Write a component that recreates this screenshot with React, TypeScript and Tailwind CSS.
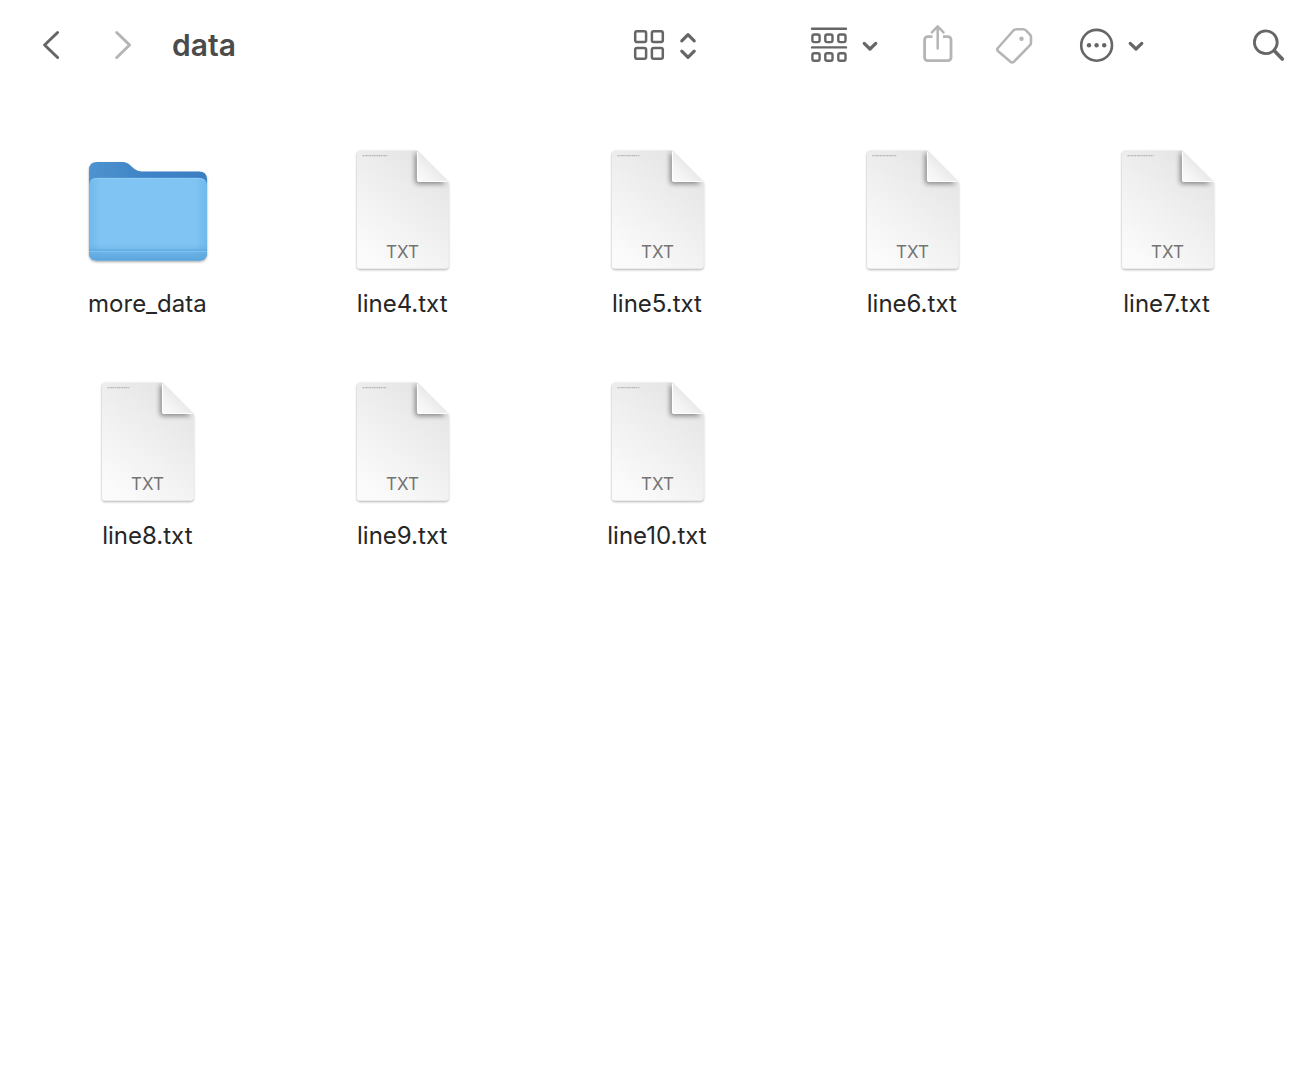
import type { ReactNode } from "react";

type Entry = { name: string; kind: "folder" | "txt"; preview?: number };

const entries: Entry[] = [
  { name: "more_data",  kind: "folder" },
  { name: "line4.txt",  kind: "txt", preview: 25 },
  { name: "line5.txt",  kind: "txt", preview: 22 },
  { name: "line6.txt",  kind: "txt", preview: 24 },
  { name: "line7.txt",  kind: "txt", preview: 26 },
  { name: "line8.txt",  kind: "txt", preview: 22 },
  { name: "line9.txt",  kind: "txt", preview: 24 },
  { name: "line10.txt", kind: "txt", preview: 22 },
];

function Glyph({ width, children }: { width: number; children: ReactNode }) {
  return (
    <svg
      width={width}
      height={44}
      viewBox={`0 0 ${width} 44`}
      fill="none"
      stroke="currentColor"
      strokeLinecap="round"
      strokeLinejoin="round"
      className="block shrink-0"
      aria-hidden="true"
    >
      {children}
    </svg>
  );
}

function ChevronDown() {
  return (
    <Glyph width={20}>
      <path d="M4.200 20.400 10 26l5.800-5.600" strokeWidth="3.200" />
    </Glyph>
  );
}

function Toolbar() {
  return (
    <header className="flex h-[90px] items-center pl-10 pr-[26px] text-[#666]">
      <nav className="flex items-center gap-12">
        <button type="button" aria-label="Back">
          <Glyph width={24}>
            <path d="M17.600 9.500 4.600 22l13 12.500" strokeWidth="3" />
          </Glyph>
        </button>
        <button type="button" aria-label="Forward" disabled className="text-[#b5b5b5]">
          <Glyph width={24}>
            <path d="M4.700 9.500 17.600 22 4.700 34.500" strokeWidth="3" />
          </Glyph>
        </button>
      </nav>
      <h1 className="ml-9 text-[30px] leading-9 font-semibold text-[#4b4b4b]">data</h1>

      <button type="button" aria-label="View as icons" className="ml-auto flex gap-3">
        <Glyph width={34}>
          <g strokeWidth="2.500">
            <rect x="3.200" y="8.200" width="10.900" height="10.900" rx="1.800" />
            <rect x="19.900" y="8.200" width="10.900" height="10.900" rx="1.800" />
            <rect x="3.200" y="24.900" width="10.900" height="10.900" rx="1.800" />
            <rect x="19.900" y="24.900" width="10.900" height="10.900" rx="1.800" />
          </g>
        </Glyph>
        <Glyph width={20}>
          <path d="M3.800 17.800 10 11.700l6.200 6.100M3.800 28.200 10 34.300l6.200-6.100" strokeWidth="3.200" />
        </Glyph>
      </button>

      <button type="button" aria-label="Group" className="ml-[110px] flex gap-3">
        <Glyph width={40}>
          <g strokeWidth="2.400">
            <path d="M4 5.800h34M4 24.400h34" />
            <rect x="4.400" y="11.500" width="7.200" height="7.600" rx="1.800" />
            <rect x="17.300" y="11.500" width="7.200" height="7.600" rx="1.800" />
            <rect x="30.300" y="11.500" width="7.200" height="7.600" rx="1.800" />
            <rect x="4.400" y="30.200" width="7.200" height="7.600" rx="1.800" />
            <rect x="17.300" y="30.200" width="7.200" height="7.600" rx="1.800" />
            <rect x="30.300" y="30.200" width="7.200" height="7.600" rx="1.800" />
          </g>
        </Glyph>
        <ChevronDown />
      </button>

      <button type="button" aria-label="Share" disabled className="ml-[38px] text-[#b5b5b5]">
        <Glyph width={40}>
          <path
            d="M14.500 13.700H9.600a3 3 0 0 0-3 3V34.700a3 3 0 0 0 3 3H30a3 3 0 0 0 3-3V16.700a3 3 0 0 0-3-3H25"
            strokeWidth="2.800"
            strokeLinecap="butt"
          />
          <path d="M19.700 25.500V4M13.900 9.300l5.800-5.900 5.800 5.900" strokeWidth="2.500" />
        </Glyph>
      </button>

      <button type="button" aria-label="Tags" disabled className="ml-9 text-[#b5b5b5]">
        <Glyph width={40}>
          <path
            d="M22.500 6.200h6.500q1.700 0 2.900 1.200l3.900 3.900q1.200 1.200 1.200 2.900v5.200q0 1.700-1.200 2.900L20 38.600q-1.900 1.800-3.800 0L3.900 27.900q-1.400-1.400 0-2.900L19.400 7.500q1.300-1.300 3.100-1.300z"
            strokeWidth="2.600"
          />
          <circle cx="27.500" cy="15.700" r="2.200" fill="currentColor" stroke="none" />
        </Glyph>
      </button>

      <button type="button" aria-label="More actions" className="ml-10 flex gap-3">
        <Glyph width={40}>
          <circle cx="22.600" cy="22.300" r="15.400" strokeWidth="2.600" />
          <g fill="currentColor" stroke="none">
            <circle cx="15" cy="22.300" r="2.200" />
            <circle cx="22.600" cy="22.300" r="2.200" />
            <circle cx="30.200" cy="22.300" r="2.200" />
          </g>
        </Glyph>
        <ChevronDown />
      </button>

      <button type="button" aria-label="Search" className="ml-[102px]">
        <Glyph width={40}>
          <circle cx="17.800" cy="19.300" r="11.400" strokeWidth="2.800" />
          <path d="m26.300 27.800 8 8.200" strokeWidth="3.600" />
        </Glyph>
      </button>
    </header>
  );
}

// Gradients and filters shared by every icon in the grid
function IconDefs() {
  return (
    <svg width="0" height="0" className="absolute" aria-hidden="true">
      <defs>
        <linearGradient id="folderBack" x1="0" y1="0" x2="1" y2="0">
          <stop offset="0" stopColor="#4f93cf" />
          <stop offset="0.500" stopColor="#3d83c6" />
          <stop offset="1" stopColor="#3a7fc2" />
        </linearGradient>
        <linearGradient id="folderFront" x1="0" y1="0" x2="1" y2="0">
          <stop offset="0" stopColor="#70b8ea" />
          <stop offset="0.100" stopColor="#80c4f4" />
          <stop offset="0.900" stopColor="#80c4f4" />
          <stop offset="1" stopColor="#70b8ea" />
        </linearGradient>
        <linearGradient id="folderFoot" x1="0" y1="0" x2="0" y2="1">
          <stop offset="0" stopColor="#5aa5dd" stopOpacity="0" />
          <stop offset="1" stopColor="#5aa5dd" />
        </linearGradient>
        <linearGradient id="paper" x1="0.900" y1="0" x2="0.250" y2="1">
          <stop offset="0" stopColor="#e2e2e2" />
          <stop offset="0.500" stopColor="#efefef" />
          <stop offset="1" stopColor="#fbfbfb" />
        </linearGradient>
        <linearGradient id="curl" x1="0" y1="1" x2="0.600" y2="0.400">
          <stop offset="0" stopColor="#fcfcfc" />
          <stop offset="0.500" stopColor="#f3f3f3" />
          <stop offset="1" stopColor="#e6e6e6" />
        </linearGradient>
        <filter id="drop" x="-10%" y="-10%" width="120%" height="120%">
          <feDropShadow dx="0" dy="1.200" stdDeviation="1.100" floodColor="#000" floodOpacity="0.350" />
        </filter>
        <filter id="curlShadow" x="-30%" y="-30%" width="160%" height="160%">
          <feGaussianBlur stdDeviation="2.600" />
        </filter>
        <clipPath id="paperClip">
          <path d="M22 4.500H79L110.500 36V119.500a3 3 0 0 1-3 3H22a3 3 0 0 1-3-3V7.500a3 3 0 0 1 3-3z" />
        </clipPath>
      </defs>
    </svg>
  );
}

function FolderIcon() {
  return (
    <svg viewBox="0 0 128 128" className="size-32" aria-hidden="true">
      <g filter="url(#drop)">
        <path
          d="M6 24q0-8 8-8H38.500c5 0 7 1.500 10 4.500 4 4 7 5 12 5H116q8 0 8 8V106.500q0 8-8 8H14q-8 0-8-8z"
          fill="url(#folderBack)"
        />
        <path d="M6 39q0-7 8-7H116q8 0 8 7V106.500q0 8-8 8H14q-8 0-8-8z" fill="url(#folderFront)" />
      </g>
      <path d="M6 98H124V106.500q0 8-8 8H14q-8 0-8-8z" fill="url(#folderFoot)" />
      <path d="M8.500 34.500q2-2.200 6-2.200H115.500q4 0 6 2.200" fill="none" stroke="#96cff8" strokeWidth="0.800" />
      <path d="M6 104H124" stroke="#5ea8de" strokeWidth="1" />
      <path d="M6 105.500H124" stroke="#7fc1ee" strokeWidth="1" />
    </svg>
  );
}

function TextFileIcon({ preview }: { preview: number }) {
  return (
    <svg viewBox="0 0 128 128" className="size-32" aria-hidden="true">
      <path
        d="M22 4.500H79L110.500 36V119.500a3 3 0 0 1-3 3H22a3 3 0 0 1-3-3V7.500a3 3 0 0 1 3-3z"
        fill="url(#paper)"
        filter="url(#drop)"
      />
      <g clipPath="url(#paperClip)">
        <path d="M77 8V35q0 3 3 3H108L79 6z" fill="#000" opacity="0.420" filter="url(#curlShadow)" />
      </g>
      <path d="M79 4.500V33.500q0 2.500 2.500 2.500H110.500z" fill="url(#curl)" />
      <path d="M79.500 6V33q0 2.500 2.500 2.500H109" fill="none" stroke="#fff" strokeWidth="1.200" />
      <path d={`M24.500 9.700h${preview}`} stroke="#a3a3a3" strokeWidth="1" strokeDasharray="1.600 0.600 0.900 0.500" />
      <text x="64.500" y="112" textAnchor="middle" fill="#737373" className="font-['Inter'] text-[17px]">
        TXT
      </text>
    </svg>
  );
}

export default function App() {
  return (
    <div className="min-h-screen bg-white font-['Inter',sans-serif]">
      <IconDefs />
      <Toolbar />
      <main className="px-5 pt-14">
        <ul className="grid grid-cols-5 gap-y-[58px]">
          {entries.map(({ name, kind, preview = 24 }) => (
            <li key={name} className="flex justify-center">
              <button type="button" className="flex flex-col items-center gap-3.5">
                {kind === "folder" ? <FolderIcon /> : <TextFileIcon preview={preview} />}
                <span className="text-2xl leading-8 text-[#262626]">{name}</span>
              </button>
            </li>
          ))}
        </ul>
      </main>
    </div>
  );
}
